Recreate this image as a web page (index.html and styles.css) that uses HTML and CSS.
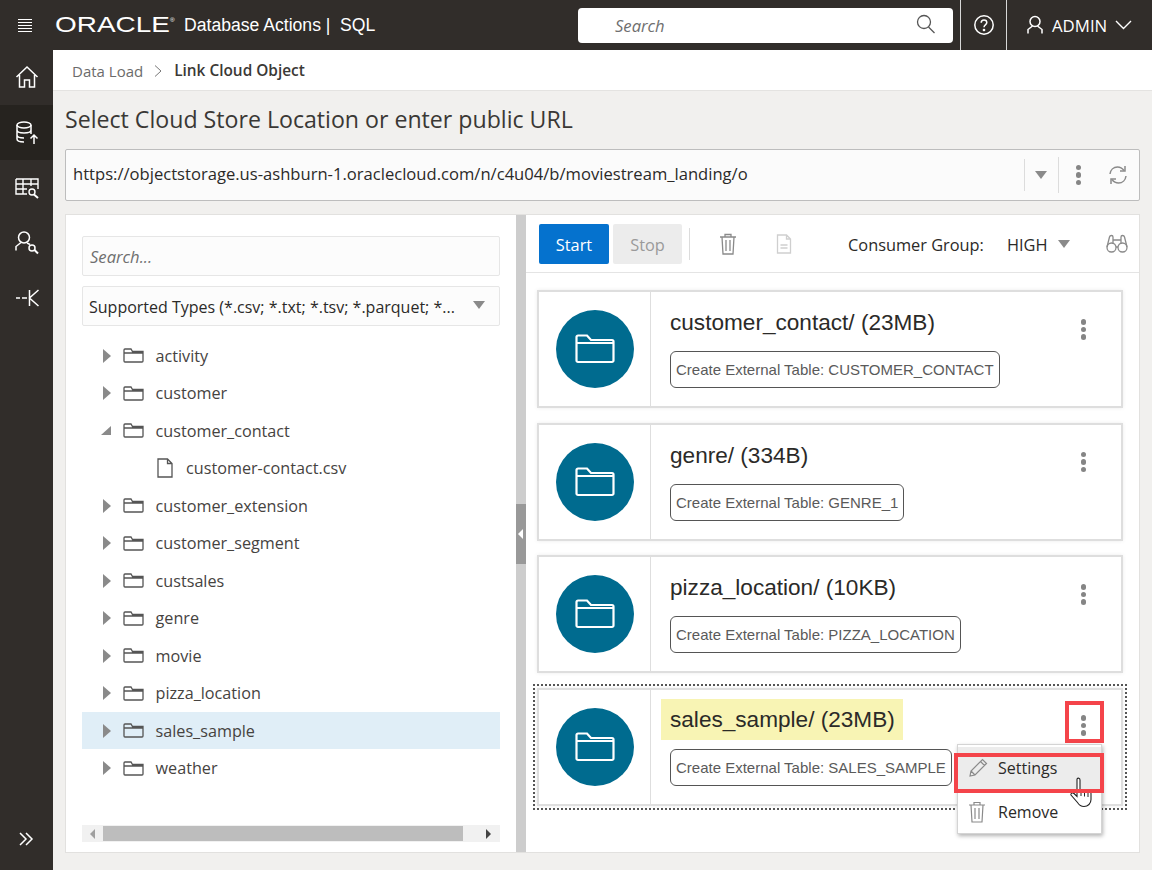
FILE: index.html
```html
<!DOCTYPE html>
<html lang="en">
<head>
<meta charset="UTF-8">
<title>Database Actions | SQL</title>
<link rel="stylesheet" href="styles.css">
</head>
<body>
<svg class="sprite" width="0" height="0">
    <symbol id="tree-folder" viewBox="0 0 21 15"><path d="M1 4V13a1 1 0 0 0 1 1h17a1 1 0 0 0 1-1V3.500H9.500L8 1H2a1 1 0 0 0-1 1v3h19"/></symbol>
    <symbol id="big-folder" viewBox="0 0 40 30"><path d="M1.500 9V3a1.500 1.500 0 0 1 1.500-1.500h9l4 4.500h21a1.500 1.500 0 0 1 1.500 1.500v19a1.500 1.500 0 0 1-1.500 1.500H3a1.500 1.500 0 0 1-1.500-1.500V9h37"/></symbol>
    <symbol id="trash" viewBox="0 0 18 22"><path d="M1 4h16M6 4V1.500h6V4M3 4l1 17h10l1-17M7 7v11M11 7v11"/></symbol>
</svg>

<header class="topbar">
    <svg class="menu-icon" width="16" height="15" viewBox="0 0 16 15"><path d="M1 1.500h14M1 4.500h14M1 7.500h14M1 10.500h14M1 13.500h14" stroke="#fff" stroke-width="1"/></svg>
    <span class="logo">ORACLE<sup>®</sup></span>
    <span class="app-title">Database Actions |</span>
    <span class="app-name">SQL</span>
    <div class="top-search">
        <span>Search</span>
        <svg width="22" height="22" viewBox="0 0 22 22" fill="none" stroke="#555" stroke-width="1.300"><circle cx="9" cy="9" r="6.500"/><path d="M13.500 14l6 6"/></svg>
    </div>
    <div class="top-cell help">
        <svg width="22" height="22" viewBox="0 0 22 22" fill="none" stroke="#fff" stroke-width="1.500"><circle cx="11" cy="11" r="9.200"/><path d="M8.200 8.800c0-1.800 1.300-2.800 2.800-2.800s2.800 1 2.800 2.600c0 2.400-2.800 2.200-2.800 4.600"/><circle cx="11" cy="16" r=".6"/></svg>
    </div>
    <div class="top-cell user">
        <svg width="18" height="20" viewBox="0 0 18 20" fill="none" stroke="#fff" stroke-width="1.500"><circle cx="9" cy="6.500" r="5"/><path d="M6.500 11L2 14.500V18.500M11.500 11l4.500 3.500v4"/></svg>
        <span>ADMIN</span>
        <svg width="17" height="10" viewBox="0 0 17 10" fill="none" stroke="#fff" stroke-width="1.400"><path d="M1 1l7.500 7.500L16 1"/></svg>
    </div>
</header>

<div class="shell">
    <nav class="sidenav">
        <a class="nav-item home">
            <svg width="24" height="24" viewBox="0 0 24 24" fill="none" stroke="#fff" stroke-width="1.500"><path d="M1.500 12L12 2l10.500 10M4.500 10v12h5v-7h5v7h5V10"/></svg>
        </a>
        <a class="nav-item active">
            <svg width="26" height="26" viewBox="0 0 26 26" fill="none" stroke="#fff" stroke-width="1.500"><ellipse cx="10" cy="5" rx="7" ry="3"/><path d="M3 5v14c0 2 3 3 7 3M17 5v9M3 10c0 2 3 3 7 3s7-1 7-3M3 15c0 2 3 3 7 3"/><path d="M20 24v-9M16.500 18.500L20 15l3.500 3.500"/></svg>
        </a>
        <a class="nav-item">
            <svg width="26" height="24" viewBox="0 0 26 24" fill="none" stroke="#fff" stroke-width="1.400"><path d="M2 3h22v10M2 3v15h11M2 8h22M2 13h11M9 3v15M17 3v7"/><circle cx="18" cy="16" r="3"/><path d="M20 18.500l4 3.500" stroke-width="2"/></svg>
        </a>
        <a class="nav-item">
            <svg width="26" height="26" viewBox="0 0 26 26" fill="none" stroke="#fff" stroke-width="1.500"><circle cx="10" cy="7.500" r="5.500"/><path d="M7 12.500l-5 4v4M13 13l3 1.500"/><circle cx="18" cy="18" r="3"/><path d="M20.500 20l3.500 3.500" stroke-width="2"/></svg>
        </a>
        <a class="nav-item">
            <svg width="24" height="18" viewBox="0 0 24 18" fill="none" stroke="#fff" stroke-width="1.500"><path d="M1 9h4M7 9h5M14.500 1v16M23.500 1l-9 8 9 8"/></svg>
        </a>
        <a class="nav-expand">
            <svg width="15" height="14" viewBox="0 0 15 14" fill="none" stroke="#fff" stroke-width="1.500"><path d="M1 1l6 6-6 6M7 1l6 6-6 6"/></svg>
        </a>
    </nav>

    <main class="content">
        <div class="crumbs">
            <span class="crumb-link">Data Load</span>
            <svg width="10" height="14" viewBox="0 0 10 14" fill="none" stroke="#777" stroke-width="1"><path d="M2 1.500l6 5.500-6 5.500"/></svg>
            <span class="crumb-now">Link Cloud Object</span>
        </div>

        <div class="page">
            <h1>Select Cloud Store Location or enter public URL</h1>

            <div class="url-bar">
                <span class="url-text">https://objectstorage.us-ashburn-1.oraclecloud.com/n/c4u04/b/moviestream_landing/o</span>
                <span class="url-caret"><span class="caret-down"></span></span>
                <span class="url-actions">
                    <span class="dots"><i></i><i></i><i></i></span>
                    <svg width="20" height="20" viewBox="0 0 20 20" fill="none" stroke="#8a8a8a" stroke-width="1.500"><path d="M2 9c.5-4 3.500-7 7.500-7 3 0 5 1.500 6.500 3.500M18 11c-.5 4-3.500 7-7.500 7-3 0-5-1.500-6.500-3.500"/><path d="M17 1v5h-5M3 19v-5h5"/></svg>
                </span>
            </div>

            <div class="workspace">
                <section class="left-pane">
                    <div class="field search-field">Search...</div>
                    <div class="field types-field">
                        <span>Supported Types (*.csv; *.txt; *.tsv; *.parquet; *...</span>
                        <span class="caret-down"></span>
                    </div>

                    <ul class="tree">
                        <li><span class="arrow"></span><svg class="folder"><use href="#tree-folder"/></svg>activity</li>
                        <li><span class="arrow"></span><svg class="folder"><use href="#tree-folder"/></svg>customer</li>
                        <li><span class="arrow open"></span><svg class="folder"><use href="#tree-folder"/></svg>customer_contact</li>
                        <li class="file"><svg class="file-icon" viewBox="0 0 16 20"><path d="M1 1h9.500L15 5.500V19H1zM10.500 1v4.500H15"/></svg>customer-contact.csv</li>
                        <li><span class="arrow"></span><svg class="folder"><use href="#tree-folder"/></svg>customer_extension</li>
                        <li><span class="arrow"></span><svg class="folder"><use href="#tree-folder"/></svg>customer_segment</li>
                        <li><span class="arrow"></span><svg class="folder"><use href="#tree-folder"/></svg>custsales</li>
                        <li><span class="arrow"></span><svg class="folder"><use href="#tree-folder"/></svg>genre</li>
                        <li><span class="arrow"></span><svg class="folder"><use href="#tree-folder"/></svg>movie</li>
                        <li><span class="arrow"></span><svg class="folder"><use href="#tree-folder"/></svg>pizza_location</li>
                        <li class="selected"><span class="arrow"></span><svg class="folder"><use href="#tree-folder"/></svg>sales_sample</li>
                        <li><span class="arrow"></span><svg class="folder"><use href="#tree-folder"/></svg>weather</li>
                    </ul>

                    <div class="hscroll">
                        <span class="hs-left"></span>
                        <span class="hs-thumb"></span>
                        <span class="hs-right"></span>
                    </div>
                </section>

                <div class="splitter"><span class="split-handle"></span></div>

                <section class="right-pane">
                    <div class="toolbar">
                        <button class="btn-start">Start</button>
                        <button class="btn-stop">Stop</button>
                        <span class="tool-sep"></span>
                        <svg class="tool-trash" width="18" height="22" fill="none" stroke="#8a8a8a" stroke-width="1.300"><use href="#trash"/></svg>
                        <svg class="tool-doc" width="16" height="20" viewBox="0 0 16 20" fill="none" stroke="#cfcfcf" stroke-width="1.300"><path d="M1.500 1h9l4 4v14h-13zM10.500 1v4h4M4.500 11h7M4.500 14h7"/></svg>
                        <span class="group-label">Consumer Group:</span>
                        <span class="group-value">HIGH</span>
                        <span class="caret-down"></span>
                        <svg class="tool-bino" width="22" height="20" viewBox="0 0 22 20" fill="none" stroke="#8a8a8a" stroke-width="1.300"><circle cx="5.500" cy="13.500" r="4.500"/><circle cx="16.500" cy="13.500" r="4.500"/><path d="M1 13L3.500 3c.5-2 3.500-2 3.500 0v7M21 13L18.500 3c-.5-2-3.500-2-3.500 0v7M7 6h8M10 13h2"/></svg>
                    </div>

                    <article class="card">
                        <div class="card-icon"><span class="disc"><svg class="disc-folder"><use href="#big-folder"/></svg></span></div>
                        <div class="card-main">
                            <h2>customer_contact/ (23MB)</h2>
                            <span class="chip">Create External Table: CUSTOMER_CONTACT</span>
                        </div>
                        <span class="dots card-dots"><i></i><i></i><i></i></span>
                    </article>

                    <article class="card">
                        <div class="card-icon"><span class="disc"><svg class="disc-folder"><use href="#big-folder"/></svg></span></div>
                        <div class="card-main">
                            <h2>genre/ (334B)</h2>
                            <span class="chip">Create External Table: GENRE_1</span>
                        </div>
                        <span class="dots card-dots"><i></i><i></i><i></i></span>
                    </article>

                    <article class="card">
                        <div class="card-icon"><span class="disc"><svg class="disc-folder"><use href="#big-folder"/></svg></span></div>
                        <div class="card-main">
                            <h2>pizza_location/ (10KB)</h2>
                            <span class="chip">Create External Table: PIZZA_LOCATION</span>
                        </div>
                        <span class="dots card-dots"><i></i><i></i><i></i></span>
                    </article>

                    <div class="card-focus">
                        <article class="card">
                            <div class="card-icon"><span class="disc"><svg class="disc-folder"><use href="#big-folder"/></svg></span></div>
                            <div class="card-main">
                                <h2 class="marked">sales_sample/ (23MB)</h2>
                                <span class="chip">Create External Table: SALES_SAMPLE</span>
                            </div>
                            <span class="dots card-dots"><i></i><i></i><i></i></span>
                        </article>

                        <span class="callout callout-dots"></span>

                        <div class="menu">
                            <div class="menu-row hover">
                                <svg width="20" height="20" viewBox="0 0 20 20" fill="none" stroke="#8a8a8a" stroke-width="1.200"><path d="M2 18l1-5L14.500 1.500l4 4L7 17zM3 13l4 4M12.500 3.500l4 4"/></svg>
                                Settings
                            </div>
                            <div class="menu-row remove">
                                <svg width="18" height="22" fill="none" stroke="#8a8a8a" stroke-width="1.200"><use href="#trash"/></svg>
                                Remove
                            </div>
                        </div>

                        <svg class="cursor" width="24" height="32" viewBox="0 0 24 32"><path d="M7 2c1-1.500 3-1 3 1v10c2-1 4-.5 4 .5 2-.5 3.500 0 3.500 1 2-.5 3.500.5 3.500 2v6c0 4-3 7-7 7-3 0-5-1.500-6.500-4L1 18c-.5-1.500 1.500-3 3-1.500l3 3z" fill="#fff" stroke="#222" stroke-width="1.100"/><path d="M11 14v5M14.500 14.500v5M18 16v4" stroke="#222" fill="none"/></svg>

                        <span class="callout callout-row"></span>
                    </div>
                </section>
            </div>
        </div>
    </main>
</div>
</body>
</html>
```

FILE: styles.css
```css
* {
    box-sizing: border-box;
}
html, body {
    margin: 0;
    height: 870px;
    overflow: hidden;
}
body {
    font-family: "Open Sans", "Noto Sans", sans-serif;
    color: #2b2a28;
    background-color: #f1f0ee;
}
svg {
    flex: none;
    display: block;
}
.sprite {
    display: none;
}

/* top bar */
.topbar {
    height: 50px;
    background-color: #312d2a;
    color: #fff;
    display: flex;
    align-items: center;
}
.menu-icon {
    margin-left: 17px;
}
.logo {
    font-family: "Liberation Sans", sans-serif;
    font-size: 22px;
    margin-left: 22px;
    width: 129px;
    white-space: nowrap;
    transform: scaleX(1.27);
    transform-origin: left;
}
.logo sup {
    font-size: 5px;
    vertical-align: 10px;
    line-height: 0;
}
.app-title, .app-name {
    font-family: "Liberation Sans", sans-serif;
    font-size: 17.600px;
    white-space: nowrap;
}
.app-title {
    width: 156px;
}
.app-name {
    width: 238px;
}
.top-search {
    width: 375px;
    height: 35px;
    background-color: #fff;
    border-radius: 4px;
    display: flex;
    align-items: center;
    justify-content: space-between;
    padding: 1px 16px 0 37px;
    color: #6f6f6f;
    font-style: italic;
    font-size: 16.600px;
}
.top-search svg {
    margin-top: -3px;
}
.top-cell {
    height: 50px;
    border-left: 1px solid #d8d8d8;
    display: flex;
    align-items: center;
}
.help {
    margin-left: 7px;
    width: 46px;
    justify-content: center;
}
.user {
    flex: 1;
    padding-left: 19px;
    font-size: 16.800px;
    gap: 8px;
}

/* side nav and main */
.shell {
    display: flex;
    height: 820px;
}
.sidenav {
    width: 53px;
    flex: none;
    background-color: #312d2a;
    display: flex;
    flex-direction: column;
}
.nav-item {
    height: 55px;
    display: flex;
    align-items: center;
    justify-content: center;
}
.nav-item.home {
    padding-bottom: 2px;
}
.nav-item.active {
    background-color: #26231f;
}
.nav-expand {
    margin-top: auto;
    height: 58px;
    display: flex;
    justify-content: center;
    padding-top: 20px;
}
.content {
    flex: 1;
    min-width: 0;
    display: flex;
    flex-direction: column;
}
.crumbs {
    height: 41px;
    flex: none;
    background-color: #fff;
    border-bottom: 1px solid #e4e3e1;
    display: flex;
    align-items: center;
    padding: 1px 0 0 19px;
    gap: 10px;
    font-size: 15px;
}
.crumb-link {
    color: #6b6b6b;
}
.crumb-now {
    font-size: 15.400px;
    font-weight: 600;
    color: #3b3936;
    margin-left: 1px;
}
.page {
    flex: 1;
    padding: 0 12px;
    min-height: 0;
    display: flex;
    flex-direction: column;
    background-color: #f1f0ee;
}
h1 {
    margin: 0;
    height: 58px;
    padding-top: 11px;
    font-size: 23.150px;
    font-weight: 400;
    line-height: 34px;
    color: #3a3835;
}
.url-bar {
    height: 52px;
    flex: none;
    background-color: #fbfbfb;
    border: 1px solid #bdbdbd;
    border-radius: 2px;
    display: flex;
    align-items: center;
    padding: 0 11px 0 7px;
    font-size: 16.600px;
}
.url-text {
    flex: 1;
    white-space: nowrap;
    padding-bottom: 3px;
}
.url-caret {
    width: 34px;
    height: 32px;
    border-left: 1px solid #dcdcdc;
    display: flex;
    align-items: center;
    justify-content: center;
}
.url-actions {
    display: flex;
    align-items: center;
    gap: 27px;
    height: 36px;
    padding-left: 17px;
    border-left: 1px solid #dcdcdc;
}
.caret-down {
    display: block;
    width: 0;
    height: 0;
    border-left: 6px solid transparent;
    border-right: 6px solid transparent;
    border-top: 8px solid #8a8a8a;
}
.dots {
    display: flex;
    flex-direction: column;
    gap: 2px;
}
.dots i {
    display: block;
    width: 5.500px;
    height: 5.500px;
    border-radius: 50%;
    background-color: #858585;
}

/* the two panes */
.workspace {
    margin-top: 13px;
    height: 639px;
    flex: none;
    background-color: #fff;
    border: 1px solid #e2e1df;
    display: flex;
}
.left-pane {
    width: 450px;
    flex: none;
    padding: 21px 16px 0 16px;
    display: flex;
    flex-direction: column;
    position: relative;
}
.field {
    height: 40px;
    width: 418px;
    flex: none;
    background-color: #fcfcfc;
    border: 1px solid #e6e6e6;
    border-radius: 2px;
    display: flex;
    align-items: center;
    padding: 0 7px;
    font-size: 16px;
}
.search-field {
    color: #6f6f6f;
    font-style: italic;
    font-size: 16.600px;
    padding-top: 1px;
}
.types-field {
    margin-top: 10px;
    justify-content: space-between;
    padding: 2px 14px 0 6px;
    white-space: nowrap;
}
.types-field .caret-down {
    margin-top: -4px;
}
.tree {
    list-style: none;
    margin: 10.500px 0 0;
    padding: 0;
    font-size: 16.200px;
    color: #46433f;
}
.tree li {
    height: 37.500px;
    display: flex;
    align-items: center;
    padding: 1px 0 0 21px;
    white-space: nowrap;
}
.tree li.selected {
    background-color: #e0eef7;
}
.tree li.file {
    padding-left: 75px;
}
.arrow {
    width: 0;
    height: 0;
    border-top: 7px solid transparent;
    border-bottom: 7px solid transparent;
    border-left: 8px solid #8a8a8a;
    margin-right: 12px;
}
.arrow.open {
    border-top: 0 solid transparent;
    border-bottom: 9px solid #8a8a8a;
    border-left: 10px solid transparent;
    margin-left: -2px;
}
.folder {
    width: 21px;
    height: 15px;
    margin-right: 11.500px;
    fill: none;
    stroke: #555;
    stroke-width: 1.300;
}
.file-icon {
    width: 16px;
    height: 20px;
    margin-right: 13px;
    fill: none;
    stroke: #555;
    stroke-width: 1.300;
}
.hscroll {
    position: absolute;
    left: 16px;
    top: 610px;
    width: 418px;
    height: 17px;
    background-color: #f1f1f1;
    display: flex;
    align-items: center;
}
.hs-left, .hs-right {
    width: 0;
    height: 0;
    border-top: 5px solid transparent;
    border-bottom: 5px solid transparent;
}
.hs-left {
    border-right: 5px solid #a0a0a0;
    margin-left: 8px;
}
.hs-thumb {
    margin-left: 8px;
    width: 360px;
    height: 15px;
    background-color: #bdbdbd;
}
.hs-right {
    border-left: 5px solid #444;
    margin-left: 23px;
}
.splitter {
    width: 10px;
    flex: none;
    background-color: #cdcdcd;
    position: relative;
}
.split-handle {
    position: absolute;
    left: 0;
    top: 289px;
    width: 10px;
    height: 60px;
    background-color: #999;
}
.split-handle::after {
    content: "";
    position: absolute;
    left: 2px;
    top: 25px;
    border-top: 5px solid transparent;
    border-bottom: 5px solid transparent;
    border-right: 5px solid #fff;
}
.right-pane {
    flex: 1;
    min-width: 0;
    position: relative;
}
.toolbar {
    height: 58px;
    border-bottom: 1px solid #e4e4e4;
    display: flex;
    align-items: center;
    padding-left: 13px;
    font-size: 16.350px;
}
.toolbar button {
    height: 40px;
    border: none;
    border-radius: 2px;
    padding: 2px 0 0;
    font-family: inherit;
    font-size: 16.350px;
}
.btn-start {
    width: 70px;
    background-color: #0572ce;
    color: #fff;
}
.btn-stop {
    width: 69px;
    margin-left: 4px;
    background-color: #ececec;
    color: #9a9a9a;
}
.tool-sep {
    width: 1px;
    height: 32px;
    background-color: #dcdcdc;
    margin-left: 7px;
}
.tool-trash {
    margin-left: 29px;
}
.tool-doc {
    margin-left: 39px;
}
.group-label {
    margin-left: 56px;
    padding-top: 2px;
}
.group-value {
    margin-left: 23px;
    margin-right: 11px;
    padding-top: 2px;
}
.tool-bino {
    margin-left: 36px;
}
.card {
    width: 586px;
    height: 118px;
    margin: 14.500px 0 0 11px;
    border: 2px solid #dedede;
    background-color: #fff;
    box-shadow: 0 0 4px rgba(0, 0, 0, 0.08);
    display: flex;
    position: relative;
}
.toolbar + .card {
    margin-top: 17px;
}
.card-icon {
    width: 112px;
    flex: none;
    border-right: 1px solid #dedede;
    display: flex;
    align-items: center;
    justify-content: center;
}
.disc {
    width: 78px;
    height: 78px;
    border-radius: 50%;
    background-color: #006b8f;
    display: flex;
    align-items: center;
    justify-content: center;
}
.disc-folder {
    width: 40px;
    height: 30px;
    fill: none;
    stroke: #fff;
    stroke-width: 2.200;
}
.card-main {
    padding: 12px 0 0 19px;
    flex: 1;
    min-width: 0;
}
.card-main h2 {
    margin: 0;
    font-family: "Liberation Sans", sans-serif;
    font-size: 22.600px;
    font-weight: 400;
    line-height: 37px;
    color: #2b2a28;
}
.chip {
    display: block;
    width: fit-content;
    margin-top: 10px;
    height: 37px;
    line-height: 35px;
    padding: 0 5px;
    border: 1px solid #555;
    border-radius: 6px;
    font-family: "Liberation Sans", sans-serif;
    font-size: 15px;
    color: #5a5a5a;
    white-space: nowrap;
}
.card-dots {
    position: absolute;
    right: 35px;
    top: 27px;
}
.card-focus {
    position: relative;
    margin: 11px 0 0 7px;
    width: 594px;
    height: 126px;
    border: 2px dotted #555;
    padding: 2px;
}
.card-focus .card {
    margin: 0;
}
.card-focus .card-dots {
    top: 25px;
}
.card-focus .card-main {
    padding-top: 9px;
}
.card-focus .chip {
    margin-top: 9px;
}
.card-main .marked {
    width: fit-content;
    background-color: #f8f4b4;
    padding: 0 8px 0 9px;
    margin-left: -9px;
    height: 41px;
    line-height: 41px;
}

/* callouts and menu over the last card */
.callout {
    position: absolute;
    border: 4px solid #f4444a;
}
.callout-dots {
    left: 530px;
    top: 15px;
    width: 39px;
    height: 42px;
}
.menu {
    position: absolute;
    left: 422px;
    top: 58px;
    width: 145px;
    height: 90px;
    background-color: #fff;
    border: 1px solid #d4d4d4;
    box-shadow: 1px 2px 4px rgba(0, 0, 0, 0.3);
    font-size: 16px;
    z-index: 2;
}
.menu-row {
    height: 44px;
    display: flex;
    align-items: center;
    gap: 10px;
    padding: 0 0 2px 10px;
}
.menu-row.hover {
    background-color: #ececec;
    margin-top: 2px;
}
.menu-row.remove {
    gap: 12px;
}
.cursor {
    position: absolute;
    z-index: 3;
    left: 535px;
    top: 91px;
}
.callout-row {
    z-index: 4;
    left: 419px;
    top: 67px;
    width: 150px;
    height: 40px;
}
```
